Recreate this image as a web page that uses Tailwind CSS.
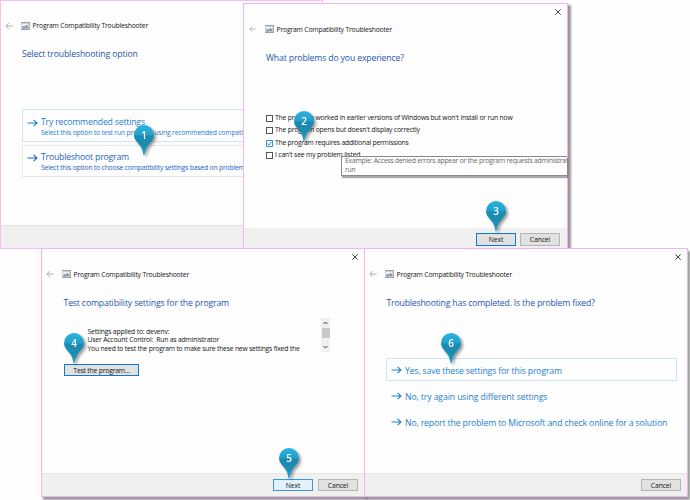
<!DOCTYPE html>
<html lang="en">
<head>
<meta charset="utf-8">
<title>Program Compatibility Troubleshooter</title>
<script src="https://cdn.jsdelivr.net/npm/@tailwindcss/browser@4"></script>
</head>
<body class="relative w-[690px] h-[500px] overflow-hidden bg-[#fefefe] font-['Open_Sans','Noto_Sans',sans-serif] text-[6.8px] leading-[9px] tracking-[-0.18px] text-[#151515] whitespace-nowrap">
<svg class="absolute w-0 h-0">
  <defs>
    <linearGradient id="pin-fill" x1="0" y1="0" x2="0" y2="1"><stop offset="0" stop-color="#2bb3e3"/><stop offset=".34" stop-color="#229fca"/><stop offset=".36" stop-color="#1b89ae"/><stop offset=".65" stop-color="#1a8db3"/><stop offset="1" stop-color="#1ba0cc"/></linearGradient>
    <symbol id="pin" viewBox="0 0 20 30"><path fill="url(#pin-fill)" d="M10 0a10 10 0 0 1 10 10c0 5-4.500 8-6.700 11.500C11.700 24 11 27 10.500 30h-1C9 27 8.300 24 6.700 21.500 4.500 18 0 15 0 10A10 10 0 0 1 10 0z"/></symbol>
    <symbol id="back" viewBox="0 0 8 8"><path d="M7.600 4H.8M3.800 1 .8 4l3 3" fill="none" stroke="#adadad" stroke-width="1"/></symbol>
    <symbol id="go" viewBox="0 0 11 8"><path d="M.5 4h9.500M6.600.8 10 4 6.600 7.200" fill="none" stroke="currentColor" stroke-width="1.100"/></symbol>
    <symbol id="close" viewBox="0 0 6 6"><path d="M.3.3l5.400 5.400M5.700.3.3 5.700" fill="none" stroke="#333" stroke-width=".9"/></symbol>
    <symbol id="app" viewBox="0 0 9 8"><path fill="#ccd2d7" d="M0 0h9v8H0z"/><path fill="#98a1a9" d="M0 0h9v1H0zM0 7h9v1H0zM8.300 1H9v6h-.7z"/><path fill="#eef2f4" d="M1 2h6v2H1z"/><path fill="#7d9ab8" d="M1.500 4.500h3v2h-3z"/><path fill="#b5897a" d="M5 4h1.500v2H5z"/><path d="M3 5.500 5.500 3 7 6.500" fill="none" stroke="#7b838b" stroke-width=".7"/></symbol>
  </defs>
</svg>

<section class="absolute left-0 top-0 flex flex-col w-[323px] h-[249px] bg-[#fefefe] border border-[#f9bff5]">
  <header class="flex items-center h-[9px] mt-[20px] ml-[4px]">
    <svg class="w-[8px] h-[8px]"><use href="#back"/></svg>
    <svg class="w-[9px] h-[8px] ml-[8px]"><use href="#app"/></svg>
    <span class="ml-[2.5px]">Program Compatibility Troubleshooter</span>
  </header>
  <h1 class="mt-[17px] ml-[21px] text-[8.7px] leading-[14px] tracking-[-0.135px] text-[#1f56b0]">Select troubleshooting option</h1>
  <div class="flex flex-col gap-[3px] mt-[48px] ml-[21px]">
    <div class="flex h-[33px] border border-[#cde6f7] pl-[4px] pt-[8px] text-[#1f80d0]">
      <svg class="w-[11px] h-[8px] mt-px"><use href="#go"/></svg>
      <div class="ml-[3px] -mt-px"><div class="text-[8.7px] leading-[11px] tracking-[-0.19px]">Try recommended settings</div><div>Select this option to test run program using recommended compatibility</div></div>
    </div>
    <div class="flex h-[32px] border border-[#e8e8e8] pl-[4px] pt-[7px] text-[#1e63c8]">
      <svg class="w-[11px] h-[8px] mt-px"><use href="#go"/></svg>
      <div class="ml-[3px] -mt-px"><div class="text-[8.7px] leading-[11px] tracking-[-0.195px]">Troubleshoot program</div><div>Select this option to choose compatibility settings based on problems</div></div>
    </div>
  </div>
  <footer class="mt-auto h-[23px] bg-[#f0f0f0] border-t border-[#e2e2e2]"></footer>
</section>

<section class="absolute left-[243px] top-[3px] flex flex-col w-[325px] h-[246px] bg-[#fefefe] border border-[#f3b3f0] shadow-[3px_2px_2px_#00000066]">
  <svg class="self-end w-[6px] h-[6px] mt-[5px] mr-[6px]"><use href="#close"/></svg>
  <header class="flex items-center h-[9px] mt-[9px] ml-[5px]">
    <svg class="w-[7px] h-[8px]"><use href="#back"/></svg>
    <svg class="w-[9px] h-[8px] ml-[9px]"><use href="#app"/></svg>
    <span class="ml-[2.5px] pt-px">Program Compatibility Troubleshooter</span>
  </header>
  <h1 class="mt-[18px] ml-[22px] text-[8.7px] leading-[14px] tracking-[-0.155px] text-[#1f56b0]">What problems do you experience?</h1>
  <div class="flex flex-col mt-[47px] ml-[22px] leading-[12.4px]">
    <div class="flex items-center gap-[2px]"><i class="size-[7px] border border-[#555]"></i><span class="tracking-[-0.19px]">The program worked in earlier versions of Windows but won't install or run now</span></div>
    <div class="flex items-center gap-[2px]"><i class="size-[7px] border border-[#555]"></i><span>The program opens but doesn't display correctly</span></div>
    <div class="flex items-center gap-[2px]"><svg class="size-[7px]" viewBox="0 0 7 7"><path d="M.5.5h6v6h-6zM1.500 3.500 3 5l2.700-3.300" fill="#fff" stroke="#1684d8" stroke-width=".9"/></svg><span class="tracking-[-0.22px]">The program requires additional permissions</span></div>
    <div class="flex items-center gap-[2px]"><i class="size-[7px] border border-[#555]"></i><span>I can't see my problem listed</span></div>
  </div>
  <div class="absolute left-[97px] top-[152px] w-[226px] h-[20px] overflow-hidden border border-r-0 border-[#8a8a8a] bg-[#fefefe] pl-[3px] leading-[8.5px] tracking-[-0.215px] text-[#686868] shadow-[1px_2px_1px_#00000055]">Example: Access denied errors appear or the program requests administrator<br>run</div>
  <footer class="flex gap-[4px] justify-end items-start mt-auto h-[20px] bg-[#f0f0f0] pt-[5px] pr-[7px] leading-[12px] text-center">
    <div class="w-[40px] h-[13px] outline-[1.5px] -outline-offset-1 outline-[#1279d2] bg-[#e1e1e1] tracking-[-0.1px] leading-[13px]">Next</div>
    <div class="w-[40px] h-[13px] border border-[#b5b5b5] bg-[#e1e1e1] tracking-[-0.1px]">Cancel</div>
  </footer>
</section>

<section class="absolute left-[41px] top-[248px] flex flex-col w-[324px] h-[249px] bg-[#fefefe] border border-[#f3b3f0] shadow-[2px_3px_2px_#00000066]">
  <svg class="self-end w-[6px] h-[6px] mt-[5px] mr-[6px]"><use href="#close"/></svg>
  <header class="flex items-center h-[9px] mt-[9px] ml-[4px]">
    <svg class="w-[8px] h-[8px]"><use href="#back"/></svg>
    <svg class="w-[9px] h-[8px] ml-[8px]"><use href="#app"/></svg>
    <span class="ml-[2.5px] pt-px">Program Compatibility Troubleshooter</span>
  </header>
  <h1 class="mt-[18px] ml-[21.500px] text-[8.7px] leading-[14px] tracking-[-0.157px] text-[#1f56b0]">Test compatibility settings for the program</h1>
  <div class="flex justify-between h-[34px] mt-[8px] ml-[45.5px] mr-[34px]">
    <div class="pt-[9.5px] leading-[8.7px]"><div>Settings applied to: devenv:</div><div>User Account Control:&nbsp; Run as administrator</div><div class="tracking-[-0.21px]">You need to test the program to make sure these new settings fixed the</div></div>
    <div class="flex flex-col items-center w-[9px] bg-[#f0f0f0] py-[3px]">
      <svg class="w-[5px] h-[4px]" viewBox="0 0 5 4"><path d="M.5 3 2.500 1l2 2" fill="none" stroke="#444"/></svg>
      <i class="w-[8px] h-[10px] mt-[3px] bg-[#c9c9c9]"></i>
      <svg class="w-[5px] h-[4px] mt-auto" viewBox="0 0 5 4"><path d="M.5 1 2.500 3l2-2" fill="none" stroke="#444"/></svg>
    </div>
  </div>
  <div class="w-[75px] h-[12px] mt-[12px] ml-[22px] outline-1 -outline-offset-1 outline-[#1279d2] bg-[#e1e1e1] leading-[13px] text-center tracking-[-0.2px]">Test the program...</div>
  <footer class="flex gap-[5px] justify-end items-start mt-auto h-[23px] bg-[#f0f0f0] border-t border-[#e6e6e6] pt-[5px] pr-[6px] leading-[11px] text-center">
    <div class="w-[40px] h-[12px] border border-[#3c97de] bg-[#e2f1fb] tracking-[-0.1px]">Next</div>
    <div class="w-[40px] h-[12px] border border-[#b5b5b5] bg-[#e1e1e1] tracking-[-0.1px]">Cancel</div>
  </footer>
</section>

<section class="absolute left-[364px] top-[248px] flex flex-col w-[324px] h-[249px] bg-[#fefefe] border border-[#f3b3f0] shadow-[2px_3px_2px_#00000066]">
  <svg class="self-end w-[6px] h-[6px] mt-[5px] mr-[6px]"><use href="#close"/></svg>
  <header class="flex items-center h-[9px] mt-[9px] ml-[4px]">
    <svg class="w-[8px] h-[8px]"><use href="#back"/></svg>
    <svg class="w-[9px] h-[8px] ml-[8px]"><use href="#app"/></svg>
    <span class="ml-[2.5px] pt-px">Program Compatibility Troubleshooter</span>
  </header>
  <h1 class="mt-[18px] ml-[21.500px] text-[8.7px] leading-[14px] tracking-[-0.183px] text-[#1f56b0]">Troubleshooting has completed. Is the problem fixed?</h1>
  <div class="flex flex-col gap-[3px] mt-[48px] ml-[21px] mr-[10px] text-[8.7px] leading-[12px] text-[#1f80d0]">
    <div class="flex items-center h-[23px] gap-[3px] pl-[4px] border border-[#cfe4f5]"><svg class="w-[11px] h-[8px] mt-px"><use href="#go"/></svg><span class="pt-[2px] tracking-[-0.16px]">Yes, save these settings for this program</span></div>
    <div class="flex items-center h-[23px] gap-[3px] pl-[5px]"><svg class="w-[11px] h-[8px] mt-px"><use href="#go"/></svg><span class="pt-[2px] tracking-[-0.11px]">No, try again using different settings</span></div>
    <div class="flex items-center h-[23px] gap-[3px] pl-[5px]"><svg class="w-[11px] h-[8px] mt-px"><use href="#go"/></svg><span class="pt-[2px] tracking-[-0.145px]">No, report the problem to Microsoft and check online for a solution</span></div>
  </div>
  <footer class="flex justify-end items-start mt-auto h-[23px] bg-[#f0f0f0] border-t border-[#e6e6e6] pt-[5px] pr-[6px] leading-[11px] text-center">
    <div class="w-[40px] h-[12px] border border-[#b5b5b5] bg-[#e1e1e1] tracking-[-0.1px]">Cancel</div>
  </footer>
</section>

<!-- numbered step markers -->
<div class="text-white text-[10px] leading-[20px] font-semibold text-center tracking-normal">
  <div class="absolute left-[134px] top-[125px] w-[20px] h-[30px] drop-shadow-[2px_2px_1.5px_#00000066]"><svg class="absolute inset-0 w-[20px] h-[30px]"><use href="#pin"/></svg><span class="relative">1</span></div>
  <div class="absolute left-[294px] top-[111px] w-[20px] h-[30px] drop-shadow-[2px_2px_1.5px_#00000066]"><svg class="absolute inset-0 w-[20px] h-[30px]"><use href="#pin"/></svg><span class="relative">2</span></div>
  <div class="absolute left-[486px] top-[201px] w-[20px] h-[30px] drop-shadow-[2px_2px_1.5px_#00000066]"><svg class="absolute inset-0 w-[20px] h-[30px]"><use href="#pin"/></svg><span class="relative">3</span></div>
  <div class="absolute left-[64px] top-[333px] w-[20px] h-[30px] drop-shadow-[2px_2px_1.5px_#00000066]"><svg class="absolute inset-0 w-[20px] h-[30px]"><use href="#pin"/></svg><span class="relative">4</span></div>
  <div class="absolute left-[279px] top-[448px] w-[20px] h-[30px] drop-shadow-[2px_2px_1.5px_#00000066]"><svg class="absolute inset-0 w-[20px] h-[30px]"><use href="#pin"/></svg><span class="relative">5</span></div>
  <div class="absolute left-[441px] top-[333px] w-[20px] h-[30px] drop-shadow-[2px_2px_1.5px_#00000066]"><svg class="absolute inset-0 w-[20px] h-[30px]"><use href="#pin"/></svg><span class="relative">6</span></div>
</div>
</body>
</html>
